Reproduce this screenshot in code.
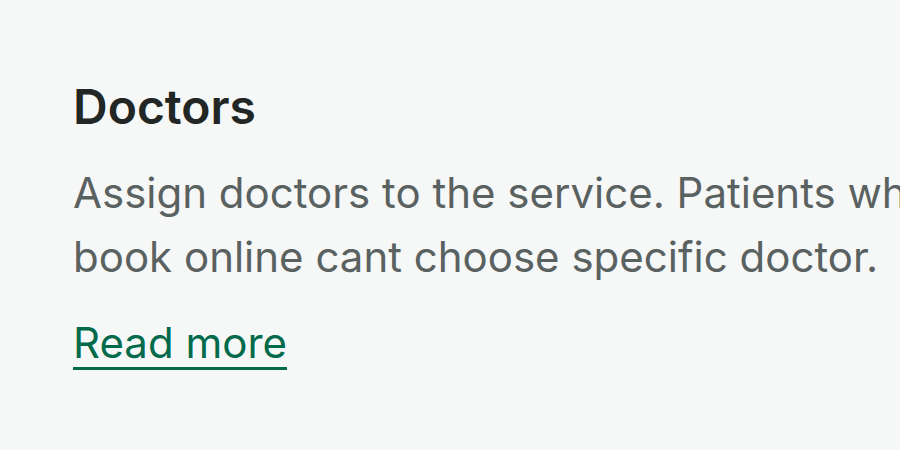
export default function App() {
  return (
    <main className="w-[900px] h-[450px] overflow-hidden bg-[#f6f8f8] font-['Inter',sans-serif]">
      <section className="pl-[73px] pt-[79px] w-[900px]">
        <h2 className="text-[48px] leading-[56px] font-semibold text-[#222625] whitespace-nowrap">Doctors</h2>
        <p className="mt-[26px] text-[42px] leading-[64px] text-[#596161] w-[827px] overflow-hidden whitespace-nowrap">
          Assign doctors to the service. Patients who
          <br />
          book online cant choose specific doctor.
        </p>
        <a href="#" className="inline-block mt-[30px] text-[42px] leading-[48px] text-[#036b4c] underline decoration-[2.5px] underline-offset-[9px]">
          Read more
        </a>
      </section>
    </main>
  )
}
